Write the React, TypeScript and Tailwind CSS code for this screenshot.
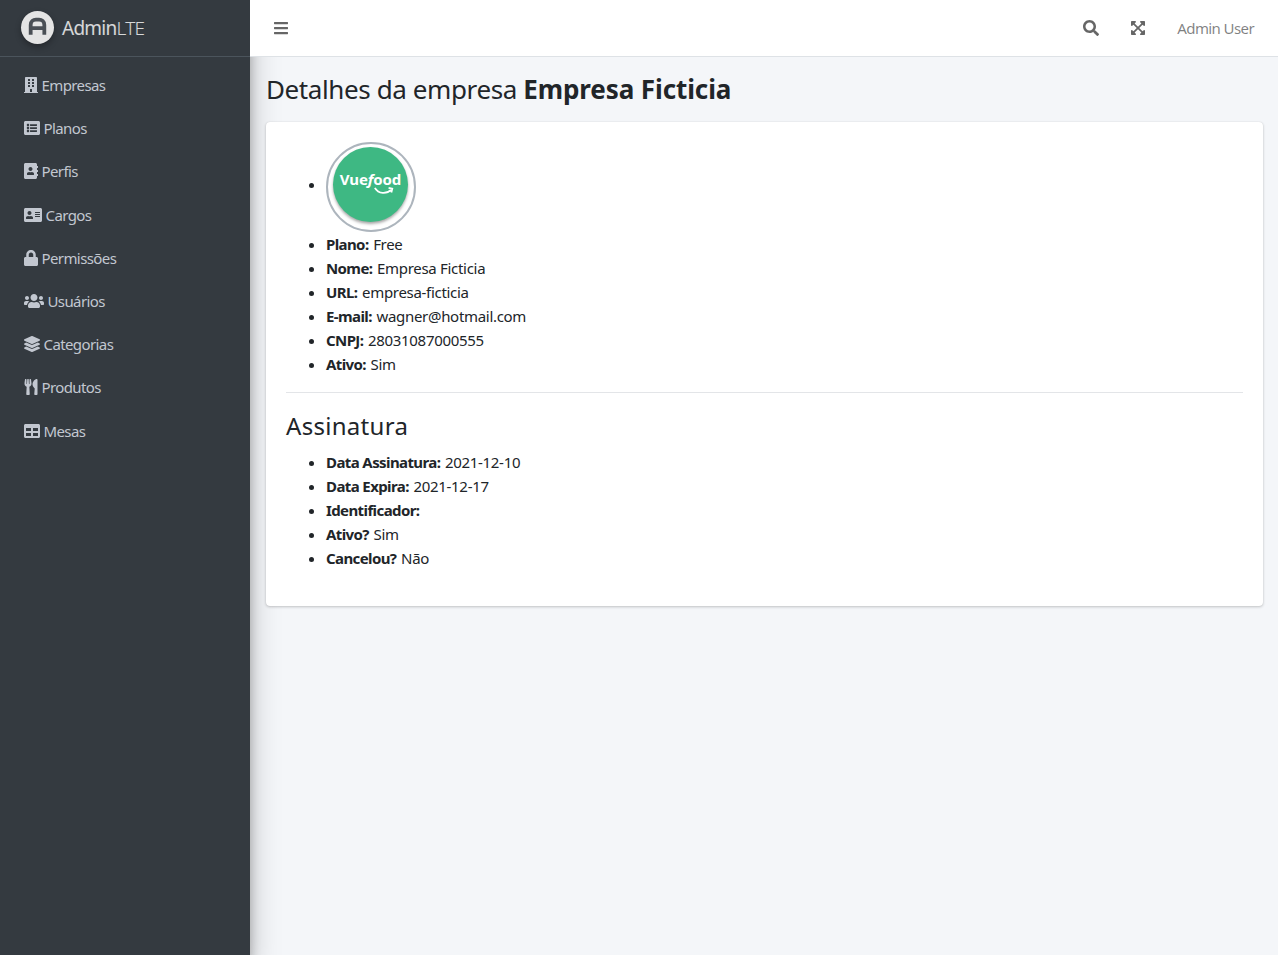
import {
  FaAddressBook,
  FaAddressCard,
  FaBars,
  FaBuilding,
  FaExpandArrowsAlt,
  FaLayerGroup,
  FaListAlt,
  FaLock,
  FaSearch,
  FaTable,
  FaUsers,
  FaUtensils,
} from "react-icons/fa";

const menu = [
  { label: "Empresas", icon: FaBuilding, h: "h-[43px]", w: "w-[14px]" },
  { label: "Planos", icon: FaListAlt, h: "h-[43px]", w: "w-[16px]" },
  { label: "Perfis", icon: FaAddressBook, h: "h-[44px]", w: "w-[14px]" },
  { label: "Cargos", icon: FaAddressCard, h: "h-[43px]", w: "w-[18px]" },
  { label: "Permissões", icon: FaLock, h: "h-[43px]", w: "w-[14px]" },
  { label: "Usuários", icon: FaUsers, h: "h-[43px]", w: "w-[20px]" },
  { label: "Categorias", icon: FaLayerGroup, h: "h-[43px]", w: "w-[16px]" },
  { label: "Produtos", icon: FaUtensils, h: "h-[44px]", w: "w-[14px]" },
  { label: "Mesas", icon: FaTable, h: "h-[43px]", w: "w-[16px]" },
];

const company = [
  { label: "Plano:", value: "Free" },
  { label: "Nome:", value: "Empresa Ficticia" },
  { label: "URL:", value: "empresa-ficticia" },
  { label: "E-mail:", value: "wagner@hotmail.com" },
  { label: "CNPJ:", value: "28031087000555" },
  { label: "Ativo:", value: "Sim" },
];

const subscription = [
  { label: "Data Assinatura:", value: "2021-12-10" },
  { label: "Data Expira:", value: "2021-12-17" },
  { label: "Identificador:", value: "" },
  { label: "Ativo?", value: "Sim" },
  { label: "Cancelou?", value: "Não" },
];

function Row({ label, value }: { label: string; value: string }) {
  return (
    <li className="h-6">
      <b className="mr-[1px] font-bold tracking-[-0.6px]">{label}</b> {value}
    </li>
  );
}

export default function App() {
  return (
    <div className="flex min-h-[955px] bg-[#f4f6f9] font-['Noto_Sans',sans-serif] text-[15px] leading-6 tracking-[-0.3px] text-[#212529]">
      <aside className="w-[250px] shrink-0 bg-[#343a40] text-[#c2c7d0] shadow-[0_14px_28px_rgba(0,0,0,0.25),0_10px_10px_rgba(0,0,0,0.22)]">
        <div className="flex h-[57px] items-center gap-[8px] border-b border-[#4b545c] pl-[21px]">
          <div className="-mt-[2px] flex h-[33px] w-[33px] items-center justify-center rounded-full bg-[#e4e4e4] shadow-[0_3px_6px_rgba(0,0,0,0.3)]">
            <svg viewBox="0 0 20 20" className="h-[21px] w-[21px]">
              <path
                d="M3.5 17V7.5C3.5 4 6 2.5 8.5 2.5h3C14 2.5 16.5 4 16.5 7.5V17M3.5 10.5h13"
                fill="none"
                stroke="#4a4f55"
                strokeWidth="3.6"
              />
            </svg>
          </div>
          <span className="text-[19px] leading-none tracking-[-0.75px] text-white/80">
            Admin<span className="font-light">LTE</span>
          </span>
        </div>
        <nav className="flex flex-col pt-[6px] tracking-[-0.6px]">
          {menu.map((item) => (
            <a key={item.label} className={`flex items-center gap-[3.5px] pl-[24px] ${item.h}`}>
              <item.icon className={`h-[16px] ${item.w}`} />
              <span>{item.label}</span>
            </a>
          ))}
        </nav>
      </aside>

      <div className="flex min-w-0 flex-1 flex-col">
        <header className="flex h-[57px] items-center border-b border-[#dee2e6] bg-white px-[24px] text-black/50">
          <FaBars className="h-[16px] w-[14px] text-black/60" />
          <div className="ml-auto flex items-center">
            <FaSearch className="h-[16px] w-[16px] text-black/60" />
            <FaExpandArrowsAlt className="ml-[31px] h-[16px] w-[16px] text-black/60" />
            <span className="ml-[31px] tracking-[-0.6px]">Admin User</span>
          </div>
        </header>

        <main className="px-[16px] pt-[15px]">
          <h1 className="h-[35px] text-[26px] leading-[35px] tracking-[-0.4px] text-[#212529]">
            Detalhes da empresa <b className="font-bold tracking-[-0.1px]">Empresa Ficticia</b>
          </h1>
          <section className="mr-[-1px] mt-[15px] h-[484px] rounded-[4px] bg-white px-[20px] pt-[20px] shadow-[0_0_1px_rgba(0,0,0,0.125),0_1px_3px_rgba(0,0,0,0.2)]">
            <ul className="list-disc pl-[40px]">
              <li className="h-[90px]">
                <div className="inline-block h-[90px] w-[90px] overflow-hidden rounded-full border-[2px] border-[#adb5bd] align-[-42px]">
                  <div className="relative ml-[5px] mt-[3px] flex h-[75px] w-[75px] items-center justify-center rounded-full bg-[#3eb883] shadow-[0_2px_3px_rgba(0,0,0,0.35)]">
                    <span className="mt-[-11px] text-[15px] font-bold tracking-[-0.1px] text-white">
                      Vue<i>f</i>ood
                    </span>
                    <svg viewBox="0 0 24 10" className="absolute left-[40px] top-[39px] w-[22px]">
                      <path d="M2 2c4 7 13 7 18 2M17 2l4 1-1 4" fill="none" stroke="#fff" strokeWidth="2" />
                    </svg>
                  </div>
                </div>
              </li>
              {company.map((row) => (
                <Row key={row.label} {...row} />
              ))}
            </ul>
            <hr className="mt-[16px] border-[#e3e5e8]" />
            <h2 className="mt-[17px] h-[32px] text-[24px] leading-[32px] tracking-[0.3px]">Assinatura</h2>
            <ul className="mt-[8px] list-disc pl-[40px]">
              {subscription.map((row) => (
                <Row key={row.label} {...row} />
              ))}
            </ul>
          </section>
        </main>
      </div>
    </div>
  );
}
